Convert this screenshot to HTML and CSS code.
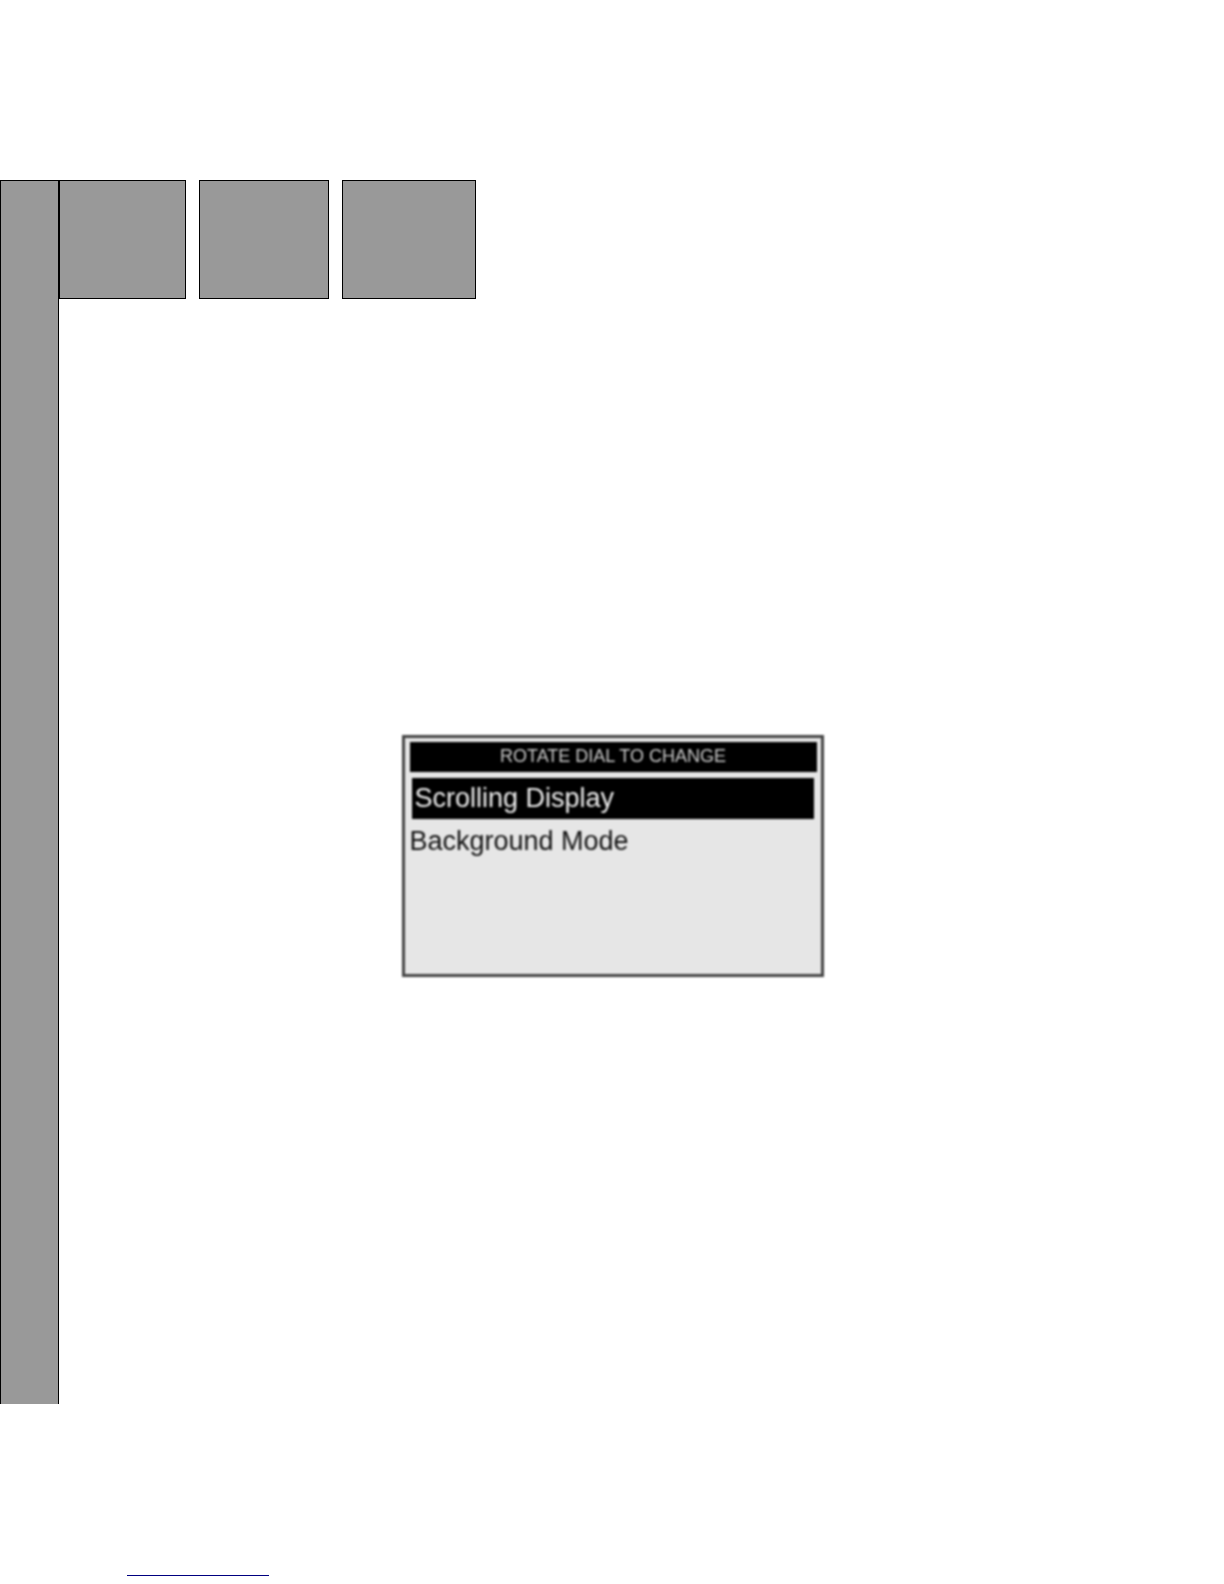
FILE: index.html
```html
<!DOCTYPE html>
<html lang="en">
	<head>
		<meta charset="UTF-8" />
		<meta name="viewport" content="width=device-width, initial-scale=1.0" />
		<title>Rotate Dial To Change</title>
		<link rel="stylesheet" href="styles.css">
	</head>
	<body>
		<div class="page">
			<aside class="sidebar"></aside>
			<main class="content">
				<div class="tiles">
					<div class="tile tile-small"></div>
					<div class="tile tile-medium"></div>
					<div class="tile tile-large"></div>
				</div>
				<div class="stage">
					<section class="screen">
						<h1 class="screen-title">ROTATE DIAL TO CHANGE</h1>
						<ul class="menu">
							<li class="selected"><button class="menu-item" type="button">Scrolling Display</button></li>
							<li><button class="menu-item" type="button">Background Mode</button></li>
						</ul>
					</section>
				</div>
			</main>
		</div>
		<footer class="footer">
			<hr class="footer-line" />
		</footer>
	</body>
</html>
```

FILE: styles.css
```css
* {
	margin: 0;
	padding: 0;
	box-sizing: border-box;
}

body {
	background-color: #fff;
	min-height: 100vh;
	padding-top: 180px;
	display: flex;
	flex-direction: column;
	font-family: 'Liberation Sans', Arial, sans-serif;
}

.page {
	flex: 1;
	display: flex;
}

.sidebar {
	flex: 0 0 59px;
	background-color: #999;
	border: 1px solid #000;
	border-bottom: none;
}

.content {
	flex: 1;
	display: flex;
	flex-direction: column;
}

.tiles {
	display: flex;
	gap: 13px;
}
.tile {
	height: 119px;
	background-color: #999;
	border: 1px solid #000;
}
.tile-small {
	width: 127px;
}
.tile-medium {
	width: 130px;
}
.tile-large {
	width: 134px;
}

.stage {
	flex: 1;
	display: flex;
	align-items: center;
	justify-content: center;
	padding: 8px 58px 0 0;
}

.screen {
	width: 100%;
	max-width: 422px;
	min-height: 242px;
	padding: 4px 4px 4px 5px;
	background-color: #e6e6e6;
	border: 3px solid #444;
	filter: blur(1px);
}
.screen-title {
	padding-bottom: 2px;
	background-color: #000;
	color: #ccc;
	font-size: 18px;
	font-weight: normal;
	line-height: 28px;
	text-align: center;
}

.menu {
	list-style: none;
	padding-top: 6px;
	display: grid;
	gap: 2px;
}
.menu-item {
	display: block;
	width: 100%;
	border: none;
	background: none;
	color: #111;
	font-family: inherit;
	font-size: 27px;
	line-height: 41px;
	text-align: left;
	cursor: pointer;
}
.selected {
	margin: 0 3px 0 2px;
	padding: 0 3px;
	background-color: #000;
}
.selected .menu-item {
	color: #eee;
}

.footer {
	height: 180px;
	padding: 0 127px 8px;
	display: flex;
	align-items: flex-end;
}
.footer-line {
	width: 142px;
	border: none;
	border-top: 1px solid #000080;
}
```
